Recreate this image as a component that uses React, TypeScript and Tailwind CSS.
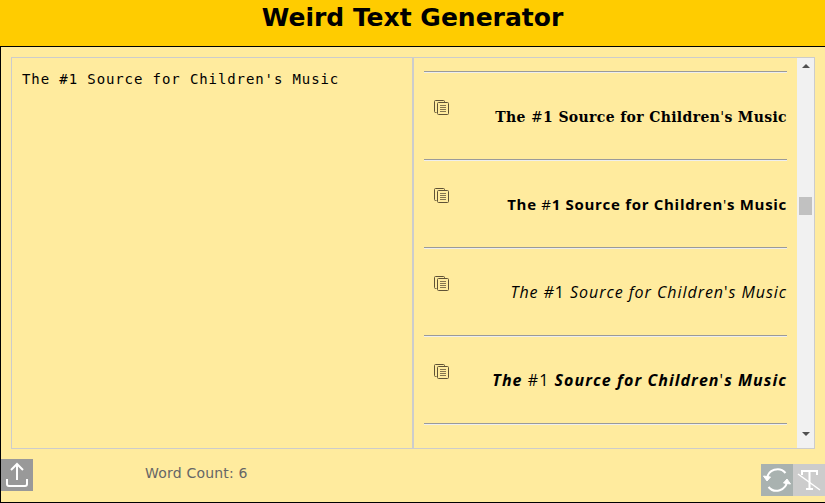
const sans = "font-['DejaVu_Sans',sans-serif]";

function CopyIcon() {
  return (
    <svg width="17" height="17" viewBox="0 0 17 17" fill="none" stroke="#5f5236" strokeWidth="1">
      <path d="M3.5 13.5h-1a1 1 0 0 1-1-1v-10a1 1 0 0 1 1-1h8a1 1 0 0 1 1 1v1" />
      <rect x="4.5" y="3.5" width="11" height="12" rx="1" fill="#ffeb9e" />
      <path d="M7 6.5h6M7 8.5h6M7 10.5h6M7 12.5h6" stroke="#84754f" />
    </svg>
  );
}

const thin = "font-normal not-italic";

function Row({ className, children }: { readonly className: string; readonly children: React.ReactNode }) {
  return (
    <div className="flex h-[88px] border-t border-[#9a9a9a] shadow-[inset_0_1px_0_#eeeeee]">
      <div className="pl-[9px] pt-[27px]">
        <CopyIcon />
      </div>
      <p className={`flex-1 whitespace-nowrap text-right leading-[24px] text-black ${className}`}>
        {children}
      </p>
    </div>
  );
}

export default function App() {
  return (
    <div className={`flex h-[503px] w-[825px] flex-col overflow-hidden bg-[#ffeb9e] ${sans}`}>
      <header className="h-[47px] shrink-0 border-b border-black bg-[#ffcc00] pt-[2px] text-center text-[25px] leading-[32px] font-bold text-black">
        Weird Text Generator
      </header>

      <div className="flex min-h-0 flex-1 flex-col border-b border-l border-black">
        <main className="mx-[10px] mt-[10px] flex h-[392px] w-[804px] border border-[#cccccc]">
          <div className="w-[402px] border-r-2 border-[#cccccc] px-[10px] py-[11px] font-['DejaVu_Sans_Mono',monospace] text-[14px] leading-[20px] tracking-[0.9px] text-black">
            The #1 Source for Children's Music
          </div>

          <div className="min-w-0 flex-1 pl-[10px] pt-[13px]">
            <div className="w-[363px]">
              <Row className="pt-[33px] font-['DejaVu_Serif',serif] text-[14px] font-bold tracking-[0.35px]">
                The <span className="font-normal">#</span>1 Source for Children<span className="font-normal">'</span>s Music
              </Row>
              <Row className="pt-[32px] font-['Open_Sans',sans-serif] text-[15px] font-bold tracking-[0.7px]">
                The <span className="font-normal">#</span>1 Source for Children<span className="font-normal">'</span>s Music
              </Row>
              <Row className="pt-[32px] font-['Open_Sans',sans-serif] text-[16px] italic tracking-[0.95px]">
                The #<span className="not-italic">1</span> Source for Children<span className="not-italic">'</span>s Music
              </Row>
              <Row className="pt-[32px] font-['Open_Sans',sans-serif] text-[16px] font-bold italic tracking-[1.05px]">
                The <span className={thin}>#1</span> Source for Children<span className={thin}>'</span>s Music
              </Row>
              <div className="h-[2px] border-t border-[#9a9a9a] bg-[#eeeeee]" />
            </div>
          </div>

          <div className="flex w-[17px] flex-col items-center bg-[#f1f1f1]">
            <div className="mt-[6px] h-0 w-0 border-x-[4px] border-b-[4px] border-x-transparent border-b-[#505050]" />
            <div className="mt-[129px] h-[18px] w-[13px] bg-[#c1c1c1]" />
            <div className="mt-[217px] h-0 w-0 border-x-[4px] border-t-[4px] border-x-transparent border-t-[#505050]" />
          </div>
        </main>

        <footer className="flex flex-1 items-start">
          <div className="mt-[10px] flex h-[32px] w-[32px] items-center justify-center bg-[#999999]">
            <svg width="24" height="26" viewBox="0 0 24 26" fill="none" stroke="#ffffff" strokeWidth="2">
              <path d="M12 18V2M6 8l6-6 6 6" />
              <path d="M2 17v5a2 2 0 0 0 2 2h16a2 2 0 0 0 2-2v-5" />
            </svg>
          </div>
          <span className="ml-[112px] mt-[15px] text-[14px] leading-[18px] tracking-[0.2px] text-[#666666]">
            Word Count: 6
          </span>
          <div className="ml-auto mt-[15px] flex">
            <div className="flex h-[32px] w-[32px] items-center justify-center bg-[#a9b2b0]">
              <svg width="30" height="30" viewBox="0 0 30 30" fill="none" stroke="#ffffff" strokeWidth="2">
                <path d="M5 14a10.5 10.5 0 0 1 18.5-6" />
                <path d="M25 16a10.5 10.5 0 0 1-18.5 6" />
                <path d="M1.5 11l3.5 5 3.5-4z" fill="#ffffff" strokeWidth="1" />
                <path d="M28.5 19l-3.5-5-3.5 4z" fill="#ffffff" strokeWidth="1" />
              </svg>
            </div>
            <div className="flex h-[32px] w-[32px] items-center justify-center bg-[#cccccc]">
              <svg width="28" height="28" viewBox="0 0 28 28" fill="none" stroke="#ffffff">
                <path d="M7 9V5h15v4M14.5 5v18M11 23h7" strokeWidth="2" />
                <path d="M3 8l22 16" strokeWidth="1.5" />
              </svg>
            </div>
          </div>
        </footer>
      </div>
    </div>
  );
}
